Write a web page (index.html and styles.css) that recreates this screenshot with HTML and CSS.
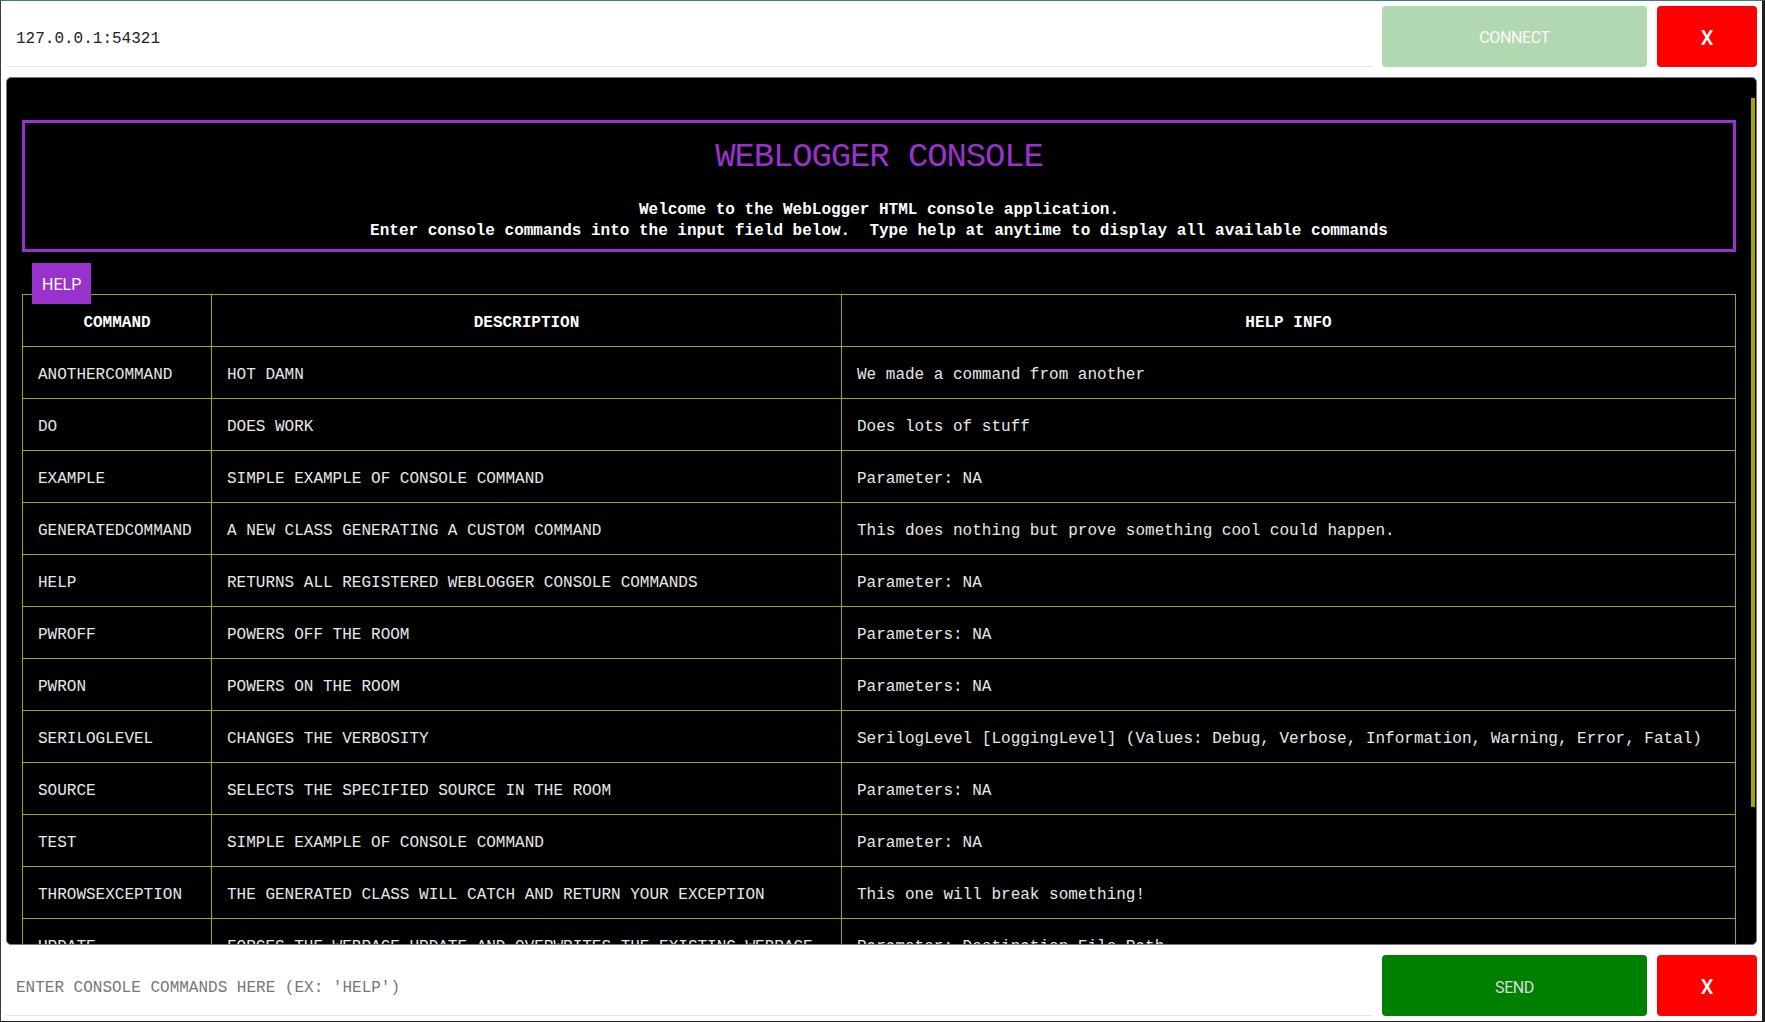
FILE: index.html
```html
<!DOCTYPE html>
<html lang="en">
<head>
<meta charset="utf-8">
<title>WebLogger Console</title>
<link rel="stylesheet" href="styles.css">
</head>
<body>
  <header class="bar">
    <input class="field field-address" type="text" value="127.0.0.1:54321">
    <button class="btn btn-connect" disabled>CONNECT</button>
    <button class="btn btn-close">X</button>
  </header>

  <main class="console">
    <div class="console-scroll">
      <section class="banner">
        <h1 class="banner-title">WEBLOGGER CONSOLE</h1>
        <p class="banner-text">Welcome to the WebLogger HTML console application.<br>Enter console commands into the input field below.&nbsp; Type help at anytime to display all available commands</p>
      </section>

      <div class="badge">HELP</div>
      <table class="cmds">
        <colgroup>
          <col class="col-cmd">
          <col class="col-desc">
          <col>
        </colgroup>
        <thead>
          <tr><th>COMMAND</th><th>DESCRIPTION</th><th>HELP INFO</th></tr>
        </thead>
        <tbody>
          <tr><td>ANOTHERCOMMAND</td><td>HOT DAMN</td><td>We made a command from another</td></tr>
          <tr><td>DO</td><td>DOES WORK</td><td>Does lots of stuff</td></tr>
          <tr><td>EXAMPLE</td><td>SIMPLE EXAMPLE OF CONSOLE COMMAND</td><td>Parameter: NA</td></tr>
          <tr><td>GENERATEDCOMMAND</td><td>A NEW CLASS GENERATING A CUSTOM COMMAND</td><td>This does nothing but prove something cool could happen.</td></tr>
          <tr><td>HELP</td><td>RETURNS ALL REGISTERED WEBLOGGER CONSOLE COMMANDS</td><td>Parameter: NA</td></tr>
          <tr><td>PWROFF</td><td>POWERS OFF THE ROOM</td><td>Parameters: NA</td></tr>
          <tr><td>PWRON</td><td>POWERS ON THE ROOM</td><td>Parameters: NA</td></tr>
          <tr><td>SERILOGLEVEL</td><td>CHANGES THE VERBOSITY</td><td>SerilogLevel [LoggingLevel] (Values: Debug, Verbose, Information, Warning, Error, Fatal)</td></tr>
          <tr><td>SOURCE</td><td>SELECTS THE SPECIFIED SOURCE IN THE ROOM</td><td>Parameters: NA</td></tr>
          <tr><td>TEST</td><td>SIMPLE EXAMPLE OF CONSOLE COMMAND</td><td>Parameter: NA</td></tr>
          <tr><td>THROWSEXCEPTION</td><td>THE GENERATED CLASS WILL CATCH AND RETURN YOUR EXCEPTION</td><td>This one will break something!</td></tr>
          <tr><td>UPDATE</td><td>FORCES THE WEBPAGE UPDATE AND OVERWRITES THE EXISTING WEBPAGE</td><td>Parameter: Destination File Path</td></tr>
        </tbody>
      </table>
    </div>
    <div class="scroll-thumb"></div>
  </main>

  <footer class="bar">
    <input class="field field-command" type="text" placeholder="ENTER CONSOLE COMMANDS HERE (EX: 'HELP')" autofocus>
    <button class="btn btn-send">SEND</button>
    <button class="btn btn-close">X</button>
  </footer>
</body>
</html>
```

FILE: styles.css
```css
html {
  margin: 0;
  background: #1e1e1e;
}

body {
  margin: 0;
  width: 1765px;
  height: 1022px;
  box-sizing: border-box;
  border-top: 1px solid #3b7f80;
  border-left: 1px solid #3a3a3a;
  border-right: 3px solid #1e1e1e;
  border-bottom: 1px solid #1e1e1e;
  background: #ffffff;
  padding: 5px;
  display: flex;
  flex-direction: column;
  gap: 10px;
  font-family: "Liberation Mono", "DejaVu Sans Mono", monospace;
  font-size: 16px;
  overflow: hidden;
}

/* ---------- top & bottom bars ---------- */
.bar {
  display: flex;
  gap: 10px;
  height: 61px;
  flex: none;
}

.field {
  flex: 1;
  min-width: 0;
  box-sizing: border-box;
  border: none;
  border-bottom: 1px solid #e4e4e4;
  background: #ffffff;
  padding: 5px 0 0 10px;
  margin: 0;
  font-family: "Liberation Mono", "DejaVu Sans Mono", monospace;
  font-size: 16px;
  color: #222222;
  outline: none;
  caret-color: #222222;
}

.field-command {
  text-transform: uppercase;
}

.field-command::placeholder {
  color: #777777;
  opacity: 1;
}

.btn {
  border: none;
  border-radius: 4px;
  margin: 0;
  padding: 3px 0 0;
  font-family: Roboto, "Liberation Sans", sans-serif;
  font-size: 16px;
  letter-spacing: -0.4px;
  cursor: pointer;
}

.btn-connect,
.btn-send {
  width: 265px;
  background: #008000;
  color: #dddddd;
}

.btn-connect {
  opacity: 0.3;
  color: #ffffff;
  padding-top: 1px;
}

.btn-close {
  width: 100px;
  background: #ff0000;
  color: #ffffff;
  font-size: 20px;
  font-weight: 500;
  letter-spacing: 0;
}

/* ---------- console ---------- */
.console {
  position: relative;
  flex: 1;
  min-height: 0;
  background: #000000;
  border: 1px solid #7a7a7a;
  border-radius: 5px;
  overflow: hidden;
  color: #eeeeee;
}

.console-scroll {
  height: 100%;
  box-sizing: border-box;
  overflow-y: auto;
  scrollbar-width: none;
  padding: 42px 20px 120px 15px;
}

.scroll-thumb {
  position: absolute;
  top: 20px;
  right: 1px;
  width: 4px;
  height: 709px;
  background: #a6a600;
}

.banner {
  border: 3px solid #9932cc;
  text-align: center;
  padding: 14px 0 7px;
}

.banner-title {
  margin: 0;
  font-size: 34px;
  letter-spacing: -1.15px;
  line-height: 40px;
  font-weight: normal;
  color: #9932cc;
}

.banner-text {
  margin: 23px 0 0;
  font-weight: bold;
  line-height: 21px;
  color: #ffffff;
}

.badge {
  position: relative;
  z-index: 1;
  width: fit-content;
  margin: 11px 0 -10px 10px;
  padding: 1px 10px 0;
  height: 40px;
  line-height: 42px;
  background: #9932cc;
  color: #ffffff;
  font-family: Roboto, "Liberation Sans", sans-serif;
  font-size: 16px;
}

.cmds {
  width: 100%;
  border-collapse: collapse;
  table-layout: fixed;
}

.col-cmd {
  width: 189px;
}

.col-desc {
  width: 630px;
}

.cmds th,
.cmds td {
  border: 1px solid #a6a600;
  padding: 18px 15px 12px;
  line-height: 21px;
  text-align: left;
  white-space: nowrap;
  overflow: hidden;
}

.cmds th {
  text-align: center;
  font-weight: bold;
  color: #ffffff;
}

.cmds td {
  color: #e8e8e8;
}
```
